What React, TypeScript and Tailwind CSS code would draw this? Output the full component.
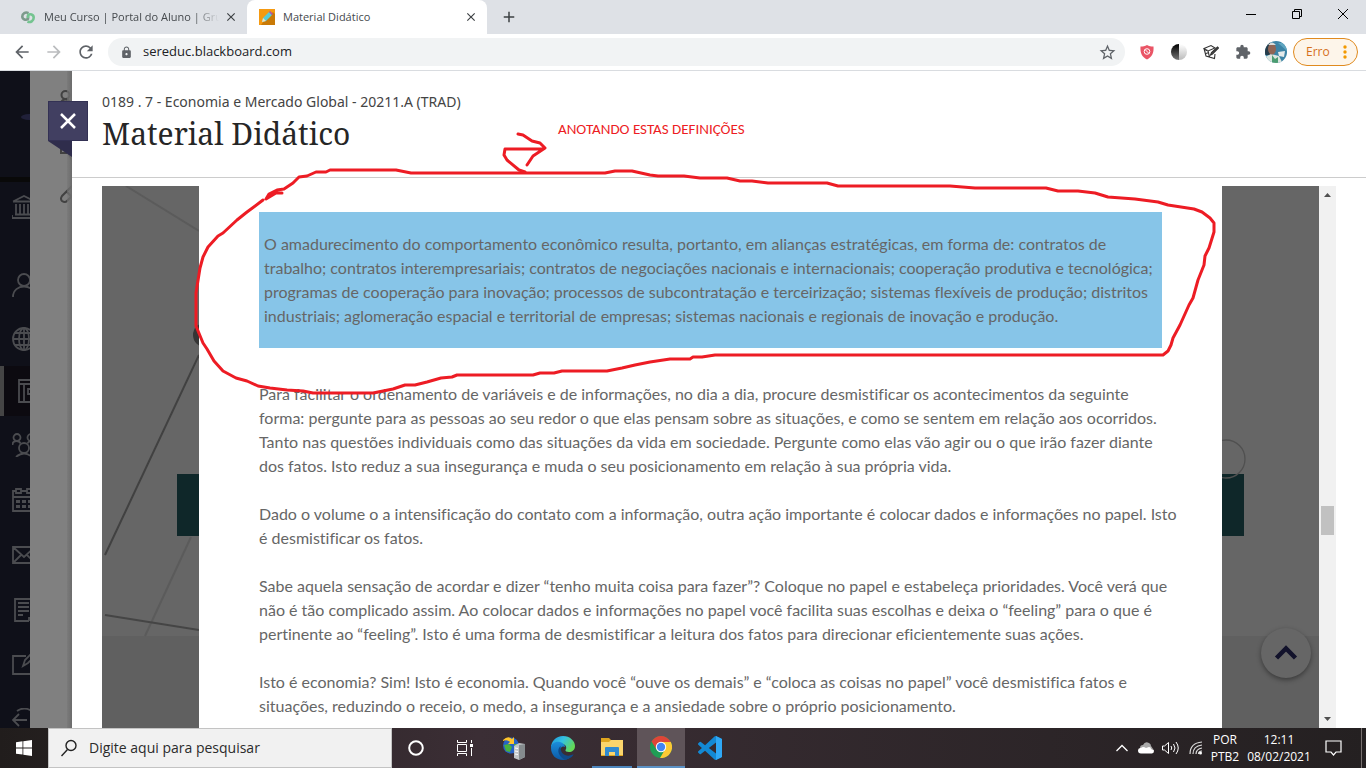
import type { ReactNode } from "react";
import { MdArrowBack, MdArrowForward, MdClose, MdExtension, MdLock, MdRefresh, MdStarBorder, MdAdd } from "react-icons/md";

const highlight = `O amadurecimento do comportamento econômico resulta, portanto, em alianças estratégicas, em forma de: contratos de
trabalho; contratos interempresariais; contratos de negociações nacionais e internacionais; cooperação produtiva e tecnológica;
programas de cooperação para inovação; processos de subcontratação e terceirização; sistemas flexíveis de produção; distritos
industriais; aglomeração espacial e territorial de empresas; sistemas nacionais e regionais de inovação e produção.`;

const paragraphs = [
  `Para facilitar o ordenamento de variáveis e de informações, no dia a dia, procure desmistificar os acontecimentos da seguinte
forma: pergunte para as pessoas ao seu redor o que elas pensam sobre as situações, e como se sentem em relação aos ocorridos.
Tanto nas questões individuais como das situações da vida em sociedade. Pergunte como elas vão agir ou o que irão fazer diante
dos fatos. Isto reduz a sua insegurança e muda o seu posicionamento em relação à sua própria vida.`,
  `Dado o volume o a intensificação do contato com a informação, outra ação importante é colocar dados e informações no papel. Isto
é desmistificar os fatos.`,
  `Sabe aquela sensação de acordar e dizer “tenho muita coisa para fazer”? Coloque no papel e estabeleça prioridades. Você verá que
não é tão complicado assim. Ao colocar dados e informações no papel você facilita suas escolhas e deixa o “feeling” para o que é
pertinente ao “feeling”. Isto é uma forma de desmistificar a leitura dos fatos para direcionar eficientemente suas ações.`,
  `Isto é economia? Sim! Isto é economia. Quando você “ouve os demais” e “coloca as coisas no papel” você desmistifica fatos e
situações, reduzindo o receio, o medo, a insegurança e a ansiedade sobre o próprio posicionamento.`,
];

function TabStrip() {
  return (
    <div className="flex h-[34px] shrink-0 bg-[#dee1e6] text-[#45494d]">
      <div className="flex w-[247px] items-center pl-5 pr-2">
        <svg className="mr-2 h-4 w-4 shrink-0" viewBox="0 0 16 16" fill="none" strokeWidth="2.600">
          <path d="M8.500 4.200C5.500 2.500 2.200 4.500 2.300 7.500c.1 3 3.700 4.200 5.700 2.300V7" stroke="#7d9a8c" />
          <path d="M7.500 12.500c3 1.500 6.300-.5 6.200-4-.1-3-3.700-4.200-5.700-2.300V9" stroke="#74c490" />
        </svg>
        <button className="min-w-0 flex-1 text-left text-[11px] whitespace-nowrap [mask-image:linear-gradient(to_right,black_85%,transparent)]">
          Meu Curso | Portal do Aluno | Gru
        </button>
        <button aria-label="Fechar guia" className="ml-1 flex h-4 w-4 items-center justify-center text-[#3c4043]"><MdClose size={14} /></button>
      </div>
      <div className="flex w-60 items-center rounded-t-lg bg-white pl-3 pr-2">
        <svg className="mr-2 h-4 w-4 shrink-0" viewBox="0 0 16 16">
          <path d="M0 0h16v16H0z" fill="#f59a12" />
          <path d="M5 12 14 3l2 2v11H2z" fill="#c97a06" />
          <path d="m3 13 1-4 6-6 3 3-6 6z" fill="#58cbd8" />
          <path d="m10 3 1-1 3 3-1 1z" fill="#a64fc0" />
          <path d="m3 13 1-4 3 3z" fill="#f4e2c0" />
        </svg>
        <button className="flex-1 text-left text-[11px]">Material Didático</button>
        <button aria-label="Fechar guia" className="flex h-4 w-4 items-center justify-center text-[#3c4043]"><MdClose size={14} /></button>
      </div>
      <button aria-label="Nova guia" className="ml-3 flex w-5 items-center justify-center text-[#3c4043]"><MdAdd size={18} /></button>
      <div className="ml-auto flex pb-1.5">
        <button aria-label="Minimizar" className="flex w-[46px] items-center justify-center">
          <svg width="10" height="10"><path d="M0 5.500h10" stroke="#000" /></svg>
        </button>
        <button aria-label="Restaurar" className="flex w-[46px] items-center justify-center">
          <svg width="10" height="10" fill="none" stroke="#000"><path d="M.5 2.500h7v7h-7zM2.500 2.500v-2h7v7h-2" /></svg>
        </button>
        <button aria-label="Fechar" className="flex w-[46px] items-center justify-center">
          <svg width="10" height="10" stroke="#000"><path d="m0 0 10 10M10 0 0 10" /></svg>
        </button>
      </div>
    </div>
  );
}

function Toolbar() {
  return (
    <div className="flex h-[37px] shrink-0 items-center border-b border-[#d9dce0] bg-white pr-2 pl-3 text-[#5f6368]">
      <button aria-label="Voltar"><MdArrowBack size={20} /></button>
      <button aria-label="Avançar" className="ml-3 text-[#babcbe]"><MdArrowForward size={20} /></button>
      <button aria-label="Recarregar" className="ml-3"><MdRefresh size={20} /></button>
      <div className="ml-3 flex h-7 flex-1 items-center rounded-full bg-[#f1f3f4] pr-2 pl-3">
        <MdLock size={13} className="shrink-0" />
        <input aria-label="Endereço" defaultValue="sereduc.blackboard.com" className="ml-2.5 min-w-0 flex-1 bg-transparent text-[13px] text-[#202124] outline-none" />
        <button aria-label="Favoritar"><MdStarBorder size={19} /></button>
      </div>
      <div className="ml-3.5 flex items-center gap-4">
        <svg width="16" height="16" viewBox="0 0 16 16">
          <path d="M8 1c2 1 4 1.500 6.500 1.500C15 9 13 13 8 15.500 3 13 1 9 1.500 2.500 4 2.500 6 2 8 1z" fill="#ea5566" />
          <circle cx="8" cy="7.500" r="2.800" fill="none" stroke="#fff" /><path d="m6 5.500 4 4" stroke="#fff" />
        </svg>
        <svg width="16" height="16" viewBox="0 0 16 16">
          <defs>
            <linearGradient id="moonDark" x2="0" y2="1"><stop stopColor="#000" /><stop offset="1" stopColor="#777" /></linearGradient>
            <linearGradient id="moonLight" x2="0" y2="1"><stop stopColor="#fff" /><stop offset="1" stopColor="#bbb" /></linearGradient>
          </defs>
          <path d="M8 0a8 8 0 0 0 0 16z" fill="url(#moonDark)" /><path d="M8 0a8 8 0 0 1 0 16z" fill="url(#moonLight)" />
        </svg>
        <svg width="16" height="16" viewBox="0 0 16 16" fill="none" stroke="#333" strokeWidth="1.100">
          <path d="m1 4.500 7-3 4 2.500-7 3zM1 4.500 3 12l8.500 2.500L12 10M5 7l1.500 6M3 9.500l3-1M1.500 7l3-1" /><path d="m7.500 11 1-2.500 6-5.500 1 1-6 6z" fill="#555" />
        </svg>
        <MdExtension size={16} />
      </div>
      <svg className="ml-3.5" width="22" height="22" viewBox="0 0 22 22">
        <clipPath id="avatarClip"><circle cx="11" cy="11" r="11" /></clipPath>
        <g clipPath="url(#avatarClip)">
          <path d="M0 0h22v22H0z" fill="#3c83a5" /><path d="M0 0h5v14H0z" fill="#263d4b" />
          <path d="M13 2h9v8z" fill="#5fa5c0" />
          <path d="m0 16 6-3 8 2 4 8H1z" fill="#dce6e0" /><path d="m7 14 3 4 3-2v6H7z" fill="#4b9c72" />
          <ellipse cx="7" cy="8" rx="4" ry="5.500" fill="#8f6555" /><path d="M3 4q4-5 8 0z" fill="#d9dcda" />
          <path d="m13 11 7-1-1 6-5-1z" fill="#e4eaea" />
        </g>
      </svg>
      <button className="ml-1.5 flex h-7 w-[65px] items-center justify-between rounded-full border border-[#e08a1e] bg-[#fdf5ea] pr-2.5 pl-3 text-xs text-[#d5701c]">
        Erro
        <svg width="4" height="16" fill="#f29900"><circle cx="2" cy="3" r="1.700" /><circle cx="2" cy="8" r="1.700" /><circle cx="2" cy="13" r="1.700" /></svg>
      </button>
    </div>
  );
}

function NavItem({ label, tall, active, children }: { label: string; tall?: boolean; active?: boolean; children: ReactNode }) {
  return (
    <button
      aria-label={label}
      className={
        active
          ? "mb-0.5 flex h-[50px] w-full shrink-0 items-center border-l-4 border-[#454545] bg-[#0c0a10] pl-3.5"
          : tall
            ? "mb-[26px] flex h-[50px] w-full shrink-0 items-center pl-3"
            : "flex h-[54px] w-full shrink-0 items-center pl-3"
      }
    >
      <svg className="h-6 w-6 shrink-0" viewBox="0 0 24 24" fill="none" stroke="#4b4c50" strokeWidth="1.800">{children}</svg>
    </button>
  );
}

function Sidebar() {
  return (
    <nav className="flex w-[30px] shrink-0 flex-col overflow-hidden bg-[#0f1019]">
      <div className="h-[111px] shrink-0 border-b-[5px] border-[#090909] pt-10">
        <svg width="30" height="12"><ellipse cx="29" cy="6" rx="8" ry="3" fill="#202039" /></svg>
      </div>
      <NavItem label="Instituição" tall><path d="M1 6.500 12 1l11 5.500M1 6.500h22M4 9v10M8 9v10M12 9v10M16 9v10M20 9v10M3 19.500h18M0 23h24M0 20v3" /></NavItem>
      <NavItem label="Perfil"><circle cx="12" cy="7" r="6" /><path d="M1 24C1 10 23 10 23 24" /></NavItem>
      <NavItem label="Atividades"><circle cx="12" cy="12" r="11" /><ellipse cx="12" cy="12" rx="5" ry="11" /><path d="M1 12h22M12 1v22M3 6h18M3 18h18" /></NavItem>
      <NavItem label="Cursos" active><path d="M1 1h22v22H1zM1 5h22M6 5v18M10 10h10v5H10z" /></NavItem>
      <div className="flex flex-col gap-px">
        <NavItem label="Organizações"><circle cx="5" cy="4.500" r="3.500" /><circle cx="19" cy="4.500" r="3.500" /><circle cx="12" cy="15" r="5" /><path d="M.5 12q0-4 4-4 3 0 4 2.500M23.500 12q0-4-4-4-3 0-4 2.500M4 24q8-7 16 0" /></NavItem>
        <NavItem label="Calendário"><path d="M4 3H1v20h22V3h-3M9 3h6M1 9h22M4 1h5v4H4zM15 1h5v4h-5z" /><path d="M4 13.500h16M4 18.500h16" strokeWidth="3" strokeDasharray="4 2" /></NavItem>
        <NavItem label="Mensagens"><path d="M1 4h22v16H1zM1 4l11 10L23 4M1 20l8-8M23 20l-8-8" /></NavItem>
        <NavItem label="Notas"><path d="M17 23H3V1h18v19M6 5h11M6 9h11M6 13h11M6 17h5M17 23v-3h4" /></NavItem>
        <NavItem label="Ferramentas"><path d="M14 3H1v18h22V10M11 13l2-6 7-7 3 3-7 7z" /></NavItem>
        <NavItem label="Sair"><path d="M5 3q7-5 15 0M5 21q7 5 15 0M1 12h14M7 6l-6 6 6 6" /></NavItem>
      </div>
    </nav>
  );
}

function UnderlyingPage() {
  return (
    <div className="relative w-[42px] shrink-0 bg-[#808080]">
      <svg width="42" height="200" fill="none" stroke="#414141" strokeWidth="2">
        <circle cx="35.500" cy="24" r="4" /><path d="M31 33q0-4.500 4.500-4.500T40 33M31 77v5h6M37 79l6 12M43 114l-11 11q-2 3 0 5 3 2 5 0l6-6M37 121l4 4" />
      </svg>
      <div className="absolute inset-y-0 right-0 w-[5px] bg-gradient-to-r from-[#777]/60 to-[#6c6c6c]" />
      <svg className="absolute top-[70px] left-[18px]" width="24" height="17"><path d="M0 0h24v16z" fill="#2f2d4c" /></svg>
      <button aria-label="Fechar painel" className="absolute top-[30px] left-[18px] z-10 flex h-10 w-10 items-center justify-center border border-[#333154] bg-[#413f61]">
        <svg width="16" height="16" stroke="#fff" strokeWidth="2.500"><path d="m1 1 14 14M15 1 1 15" /></svg>
      </button>
    </div>
  );
}

function LeftGutter() {
  return (
    <div className="flex-1 overflow-hidden bg-[#666]">
      <svg width="97" height="542" fill="none">
        <path d="M0 450h97v92H0z" fill="#606060" />
        <path d="m24 0 73 45" stroke="#5b5b5b" strokeWidth="2" />
        <path d="M97 169 3 369" stroke="#414141" strokeWidth="2" />
        <circle cx="103" cy="149" r="12" fill="#353535" />
        <path d="m89 351-46 99" stroke="#5b5b5b" strokeWidth="2" />
        <path d="m3 429 94 15" stroke="#454545" strokeWidth="2" />
        <path d="M75 288h22v62H75z" fill="#0f2729" />
      </svg>
    </div>
  );
}

function RightGutter() {
  return (
    <div className="relative flex-1 overflow-hidden bg-[#666]">
      <svg width="97" height="542" fill="none">
        <path d="M0 450h97v92H0z" fill="#606060" />
        <path d="M0 288h22v62H0z" fill="#0f2729" />
        <circle cx="4" cy="273" r="19" stroke="#505050" strokeWidth="1.300" />
      </svg>
      <button aria-label="Voltar ao topo" className="absolute right-2 bottom-[50px] flex h-[50px] w-[50px] items-center justify-center rounded-full bg-[#666] shadow-[0_2px_5px_rgba(0,0,0,0.4)]">
        <svg width="24" height="16" fill="none" stroke="#12122b" strokeWidth="4.500"><path d="m2.500 13 9.500-9.500 9.500 9.500" /></svg>
      </button>
    </div>
  );
}

function Scrollbar() {
  return (
    <div className="flex w-[17px] shrink-0 flex-col bg-[#f1f1f1]">
      <svg width="17" height="17" fill="#505050"><path d="m5 11 3.500-4 3.500 4z" /></svg>
      <div className="flex-1 px-0.5 pt-[303px]"><div className="h-[29px] bg-[#c1c1c1]" /></div>
      <svg width="17" height="17" fill="#505050"><path d="m5 6 3.500 4L12 6z" /></svg>
    </div>
  );
}

function Panel() {
  return (
    <main className="flex min-w-0 flex-1 flex-col bg-white">
      <header className="h-[107px] shrink-0 border-b border-[#ccc] pt-5 pl-[30px]">
        <p className="font-['Noto_Sans','Open_Sans',sans-serif] text-sm leading-[22px] text-[#444]">0189 . 7 - Economia e Mercado Global - 20211.A (TRAD)</p>
        <h1 className="font-['Noto_Serif','DejaVu_Serif',serif] text-[30px] leading-[42px] text-[#262626]">Material Didático</h1>
      </header>
      <div className="mx-[30px] mt-2 flex min-h-0 flex-1">
        <LeftGutter />
        <article className="w-[1023px] shrink px-[60px] pt-[26px] font-['Lato',sans-serif] text-base whitespace-pre text-[#666] [font-variant-ligatures:no-common-ligatures]">
          <p className="mb-[34px] bg-[#87c5e8] px-[5px] py-5">{highlight}</p>
          {paragraphs.map((text) => (
            <p key={text} className="mb-6 last:mb-0">{text}</p>
          ))}
        </article>
        <RightGutter />
        <Scrollbar />
      </div>
    </main>
  );
}

function Annotations() {
  return (
    <div className="pointer-events-none absolute inset-0 z-20 overflow-hidden">
      <svg width="1366" height="657" viewBox="0 71 1366 657" fill="none" stroke="#ed1c24" strokeWidth="3" strokeLinecap="round" strokeLinejoin="round">
        <path d="M282 193H276L266 199L269 194L277 190L284 189L293 183L299 177L307 176L316 172L326 172L330 170H396L411 173H605L615 171H632L650 175L658 176H684L700 178H727L740 181H752L768 183H827L838 186H950L975 188H1046L1058 191H1078L1095 193L1108 197L1135 199L1158 202L1168 205L1194 209L1202 212L1210 218L1214 223V232L1209 248L1205 256L1204 265L1198 280L1193 298L1189 305L1180 325L1173 338L1171 345L1168 351L1163 355H715L702 357H693L690 359H670L650 362L635 365L622 368L607 371H562L554 373H540L533 375H457L452 377L441 378L427 382L415 385H405L393 389L383 391L373 393H313L303 391L287 390L270 388L258 386L247 381L236 378L223 371L214 361L207 349L203 343L196 326V293L200 268L203 257L208 247L218 236L223 233L237 220L247 212L263 200" />
        <path d="M525 172L519 170L507 160L504 155L505 149H543M518 134L523 135L532 141L540 143L545 148L533 156L527 165" />
      </svg>
      <span className="absolute top-[49px] left-[558px] font-['Carlito','Lato',sans-serif] text-[15px] leading-[18px] text-[#ed1c24]">ANOTANDO ESTAS DEFINIÇÕES</span>
    </div>
  );
}

function TaskApp({ label, className = "", children }: { label: string; className?: string; children: ReactNode }) {
  return (
    <button aria-label={label} className={`flex h-full w-12 items-center justify-center ${className}`}>{children}</button>
  );
}

function Taskbar() {
  return (
    <footer className="flex h-10 shrink-0 bg-gradient-to-r from-[#211d1c] via-[#3b2e35] via-35% to-[#242021] text-white">
      <button aria-label="Iniciar" className="flex w-12 items-center justify-center">
        <svg width="16" height="16" fill="#fff"><path d="m0 2.200 6.500-.9v6.200H0zM7.300 1.200 16 0v7.500H7.300zM0 8.400h6.500v6.200L0 13.700zM7.300 8.400H16V16l-8.700-1.200z" /></svg>
      </button>
      <label className="flex w-[344px] items-center border border-[#c3c3c3] bg-[#f1f1f1] pl-3">
        <svg width="16" height="18" fill="none" stroke="#222" strokeWidth="1.400"><circle cx="10" cy="6.500" r="5" /><path d="m6.500 10.500-6 6.500" /></svg>
        <input aria-label="Pesquisar" placeholder="Digite aqui para pesquisar" className="ml-3 min-w-0 flex-1 bg-transparent text-sm text-[#2b2b2b] outline-none placeholder:text-[#2b2b2b]" />
      </label>
      <div className="flex gap-px">
        <TaskApp label="Cortana"><svg width="16" height="16" fill="none" stroke="#fff" strokeWidth="2"><circle cx="8" cy="8" r="6.800" /></svg></TaskApp>
        <TaskApp label="Visão de tarefas">
          <svg width="18" height="16" fill="none" stroke="#fff"><path d="M1.500 0v2.500h9V0M1.500 16v-2.500h9V16M1.500 4.500h9v7h-9zM15.500 0v3M15.500 8v8" /><path d="M14 4h3v3h-3z" fill="#fff" stroke="none" /></svg>
        </TaskApp>
        <TaskApp label="Gerenciador do IIS">
          <svg width="24" height="24" viewBox="0 0 24 24">
            <circle cx="9" cy="9.500" r="8" fill="#2763c5" /><path d="m2 9 5-1 3 3-2 5-4-1zM12 8h5l-1 6-3-2zM7 3l4 2-3 2z" fill="#48b23f" />
            <path d="M1 4q5-5 9-1l2-2v7H6l2-2Q5 3 1 5z" fill="#ffc52b" />
            <path d="m12 10 5-3 6 1v13l-6 3-5-2z" fill="#c2c6c8" /><path d="m17 9 6-1v13l-6 3z" fill="#858b8e" /><path d="m13 12 3 .5M13 15l3 .5M13 18l3 .5" stroke="#fff" />
          </svg>
        </TaskApp>
        <TaskApp label="Edge">
          <svg width="24" height="24" viewBox="0 0 24 24">
            <defs>
              <linearGradient id="edgeTop" x2="1" y2=".5"><stop stopColor="#1a94db" /><stop offset=".5" stopColor="#35c1e2" /><stop offset="1" stopColor="#63d957" /></linearGradient>
              <linearGradient id="edgeBody" x2="0" y2="1"><stop stopColor="#1b8edc" /><stop offset="1" stopColor="#0c59a4" /></linearGradient>
            </defs>
            <path d="M0 12C0 5 5 0 12 0s12 5 12 10c0 4-3 6-6 6-2.500 0-4-1-3.500-2 1.500-1.500 1-6-3.500-6C6 7 1 8 0 12z" fill="url(#edgeTop)" />
            <path d="M0 12c0-4 4-7 9-6 3 .5 5 3 5 5-2-1.500-5 0-5 4 0 5 7 7.500 12 4-2 3-5 5-9 5C5 24 0 19 0 12z" fill="url(#edgeBody)" />
            <path d="M9.500 10C5 14 8 21 14 23.700 20 23 23 19 22.300 18.300c-6 3.200-13.300.7-12.800-8.300z" fill="#104a88" />
          </svg>
        </TaskApp>
        <TaskApp label="Explorador de Arquivos">
          <span className="flex h-full w-10 items-center justify-center border-b-2 border-[#4d86bd]">
            <svg width="22" height="20" viewBox="0 0 22 20">
              <path d="M0 1h8l2 2h12v16H0z" fill="#e0a61f" /><path d="M0 5h8l2-2h12v15H0z" fill="#fbd56c" /><path d="M4 11q0-1 1-1h12q1 0 1 1v8h-4v-4H8v4H4z" fill="#318bd0" />
            </svg>
          </span>
        </TaskApp>
        <TaskApp label="Chrome" className="border-b-2 border-[#5b91c5] bg-[#5f5459]">
          <svg width="22" height="22" viewBox="0 0 22 22">
            <circle cx="11" cy="11" r="11" fill="#1f9d55" /><path d="M1.500 5.500a11 11 0 0 1 19 0L21 6.500H11l-4.500 7z" fill="#de4538" />
            <path d="M11 6h9.800A11 11 0 0 1 10 22l5-8.500z" fill="#fcc934" /><circle cx="11" cy="11" r="5.200" fill="#fff" /><circle cx="11" cy="11" r="4.200" fill="#4385f4" />
          </svg>
        </TaskApp>
        <TaskApp label="Visual Studio Code">
          <svg width="24" height="24" viewBox="0 0 24 24">
            <path fill="#1389d4" d="M23.150 2.587 18.210.21a1.494 1.494 0 0 0-1.705.29l-9.460 8.630-4.120-3.128a.999.999 0 0 0-1.276.057L.327 7.261A1 1 0 0 0 .326 8.740L3.899 12 .326 15.260a1 1 0 0 0 .001 1.479L1.650 17.940a.999.999 0 0 0 1.276.057l4.120-3.128 9.460 8.630a1.492 1.492 0 0 0 1.704.29l4.942-2.377A1.500 1.500 0 0 0 24 20.060V3.939a1.500 1.500 0 0 0-.85-1.352zm-5.146 14.861L10.826 12l7.178-5.448v10.896z" />
            <path d="m18 0 6 3v18l-6 3z" fill="#2fa8f5" />
          </svg>
        </TaskApp>
      </div>
      <div className="ml-auto flex items-center text-xs">
        <button aria-label="Ícones ocultos" className="flex w-6 justify-center"><svg width="12" height="8" fill="none" stroke="#fff" strokeWidth="1.300"><path d="m.5 7 5.500-5.500L11.500 7" /></svg></button>
        <svg className="mx-1" width="16" height="12" viewBox="0 0 16 12"><path d="M2 6q0-3 3-3 2-4 6-2 2 1 2 3l2 3H2z" fill="#aaa" /><path d="M3 11.500q-3 0-3-3T3 6q2-2 5 0l3-1q2 0 2 2 3 0 3 2t-2 2.500z" fill="#fff" /></svg>
        <svg className="mx-1" width="17" height="14" fill="none" stroke="#fff"><path d="M.5 5h2L6.500 1.500v11L2.500 9h-2zM9 5q1.500 2 0 4M11.500 3q3 4 0 8M14 1q4.500 6 0 12" /></svg>
        <svg className="mr-0.5 ml-1.5" width="14" height="14" fill="none" stroke="#ddd" strokeWidth="1.200"><path d="M1 13Q1 2 13 1M4 13q0-8 9-9M7 13q0-5 6-6M9.500 13q0-3 3.500-3" /><circle cx="11.500" cy="12" r="1.500" fill="#fff" stroke="none" /></svg>
        <button className="w-10 text-center leading-[17px]">POR<br />PTB2</button>
        <button className="w-[68px] text-center leading-[17px] whitespace-nowrap">12:11<br />08/02/2021</button>
        <button aria-label="Notificações" className="flex w-10 justify-center"><svg width="17" height="16" fill="none" stroke="#fff" strokeWidth="1.200"><path d="M1 1h15v11h-5l-2.500 3L6 12H1z" /></svg></button>
        <div className="mr-1 ml-2 h-10 w-px bg-[#77706f]" />
      </div>
    </footer>
  );
}

export default function App() {
  return (
    <div className="flex h-screen flex-col overflow-hidden font-['Segoe_UI','Open_Sans',sans-serif]">
      <TabStrip />
      <Toolbar />
      <div className="relative flex min-h-0 flex-1">
        <Sidebar />
        <UnderlyingPage />
        <Panel />
        <Annotations />
      </div>
      <Taskbar />
    </div>
  );
}
